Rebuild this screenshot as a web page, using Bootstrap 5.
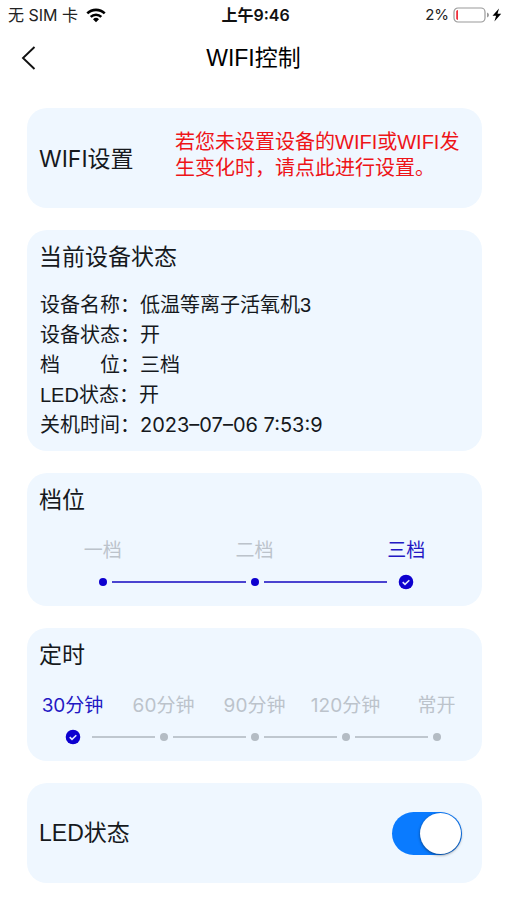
<!DOCTYPE html>
<html lang="zh-CN">
<head>
<meta charset="utf-8">
<meta name="viewport" content="width=device-width, initial-scale=1">
<title>WIFI控制</title>
<link href="https://cdn.jsdelivr.net/npm/bootstrap@5.3.0/dist/css/bootstrap.min.css" rel="stylesheet">
<style>
  body { font-family: "Liberation Sans", "Noto Sans CJK SC", sans-serif; font-size: 20px; line-height: 30px; color: #16191d; background: #fff; }
  .status-bar { height: 30px; padding: 0 4px 0 8px; font-family: Inter, "Noto Sans CJK SC", sans-serif; font-size: 16px; color: #222; }
  .side { flex: 1 1 0; }
  .percent { font-size: 15px; }
  .clock { font-weight: 600; color: #111; }
  .title-bar { display: grid; grid-template-columns: 1fr auto 1fr; height: 56px; padding: 0 20px; }
  .heading { font-size: 23px; line-height: 30px; }
  .title-bar .heading { color: #000; }
  .back { width: 18px; line-height: 0; }
  main { gap: 22px; padding: 22px 25px 17px 27px; }
  .panel { background: #eff7ff; border-radius: 20px; }
  .panel-body { padding: 12px; }
  .wifi { padding: 21px 8px 19px 12px; }
  .wifi .heading, .led .heading { line-height: 60px; }
  .wifi .heading { flex: 0 0 136px; font-family: Inter, "Noto Sans CJK SC", sans-serif; }
  .hint { line-height: 26px; color: #ee1418; }
  .led { padding: 20px; padding-left: 12px; }
  .state-list { margin-top: 18px; margin-bottom: -1px; padding-left: 1px; }
  .numeric, .step { font-family: Inter, "Noto Sans CJK SC", sans-serif; }
  .steps { margin-top: 24px; padding-bottom: 16px; }
  .step { flex: 1 1 0; gap: 11px; color: #bcc3cb; font-size: 19px; line-height: 24px; cursor: pointer; }
  .step.chosen { color: #2318c4; }
  .track { height: 16px; color: #bfc7cf; }
  .track.done { color: #4a43d0; }
  .seg { flex: 1 1 0; height: 2px; background: currentColor; }
  .seg.none { background: none; }
  .dot { appearance: none; flex: none; width: 8px; height: 8px; margin: 0 5px; border-radius: 50%; background: #b4bcc4; cursor: pointer; }
  .dot.done { background: #0d00cf; }
  .dot:checked { width: 16px; height: 16px; margin: 0 11px; background: url("data:image/svg+xml,%3Csvg xmlns='http://www.w3.org/2000/svg' viewBox='0 0 16 16'%3E%3Ccircle cx='8' cy='8' r='7.3' fill='%230d00cf'/%3E%3Cpath d='M4.7 8.2l2.3 2.2 4.3-4.2' fill='none' stroke='%23dfe6ff' stroke-width='1.6'/%3E%3C/svg%3E"); }
  .toggle { appearance: none; display: flex; width: 70px; height: 43px; margin: 0; border-radius: 22px; background: #c8ced6; cursor: pointer; }
  .toggle::before { content: ""; width: 41px; height: 41px; margin: 1px; border-radius: 50%; background: #fff; box-shadow: 0 1px 3px rgba(0, 0, 0, .5); }
  .toggle:checked { justify-content: flex-end; background: #0a7bff; }
</style>
<script src="https://cdn.jsdelivr.net/npm/bootstrap@5.3.0/dist/js/bootstrap.bundle.min.js"></script>
</head>
<body>
<header>
  <div class="status-bar d-flex align-items-center">
    <div class="side d-flex align-items-center gap-2">
      <span>无 SIM 卡</span>
      <svg width="20" height="15" viewBox="0 0 20 15" aria-hidden="true"><g fill="none" stroke="#000" stroke-width="2.6"><path d="M1.3 5.400a12.400 12.400 0 0 1 17.400 0"/><path d="M4.700 8.900a7.600 7.600 0 0 1 10.600 0"/></g><path d="M10 14.200l-3-2.900a4.300 4.300 0 0 1 6 0z"/></svg>
    </div>
    <div class="clock">上午9:46</div>
    <div class="side d-flex align-items-center justify-content-end gap-1">
      <span class="percent">2%</span>
      <svg width="50" height="16" viewBox="0 0 50 16" aria-hidden="true"><rect x="1" y="1" width="31" height="14" rx="4" fill="#fff" stroke="#999" stroke-width="1.2"/><path d="M3.200 4.600Q3.200 3 5 3v10q-1.800-.2-1.800-1.600z" fill="#f0303c"/><path d="M34 5.500q2 .8 2 2.500t-2 2.500z" fill="#999"/><path d="M46 1.500l-6.500 7.300h3.600l-1.700 5.700 6.800-7.800h-3.700z"/></svg>
    </div>
  </div>
  <div class="title-bar align-items-center">
    <button type="button" class="back btn p-0 border-0" aria-label="返回"><svg width="18" height="26" viewBox="0 0 18 26"><path d="M14.500 2L3 13l11.500 11" fill="none" stroke="#111" stroke-width="1.900"/></svg></button>
    <h1 class="heading m-0 fw-normal">WIFI控制</h1>
  </div>
</header>
<main class="d-flex flex-column">
  <a href="#wifi" id="wifi" class="panel wifi d-flex text-reset text-decoration-none">
    <span class="heading">WIFI设置</span>
    <span class="hint">若您未设置设备的WIFI或WIFI发生变化时，请点此进行设置。</span>
  </a>
  <section class="panel panel-body">
    <h2 class="heading m-0 fw-normal">当前设备状态</h2>
    <dl class="state-list">
      <div class="d-flex"><dt class="fw-normal">设备名称：</dt><dd class="m-0">低温等离子活氧机3</dd></div>
      <div class="d-flex"><dt class="fw-normal">设备状态：</dt><dd class="m-0">开</dd></div>
      <div class="d-flex"><dt class="fw-normal">档　　位：</dt><dd class="m-0">三档</dd></div>
      <div class="d-flex"><dt class="fw-normal">LED状态：</dt><dd class="m-0">开</dd></div>
      <div class="d-flex"><dt class="fw-normal">关机时间：</dt><dd class="numeric m-0">2023–07–06 7:53:9</dd></div>
    </dl>
  </section>
  <section class="panel">
    <h2 class="heading fw-normal m-0 px-2 ms-1 pt-2 mt-1">档位</h2>
    <div class="steps d-flex text-center" role="radiogroup" aria-label="档位">
      <label class="step d-flex flex-column">一档<span class="track done d-flex align-items-center"><span class="seg none"></span><input class="dot done" type="radio" name="gear"><span class="seg"></span></span></label>
      <label class="step d-flex flex-column">二档<span class="track done d-flex align-items-center"><span class="seg"></span><input class="dot done" type="radio" name="gear"><span class="seg"></span></span></label>
      <label class="step chosen d-flex flex-column">三档<span class="track done d-flex align-items-center"><span class="seg"></span><input class="dot" type="radio" name="gear" checked><span class="seg none"></span></span></label>
    </div>
  </section>
  <section class="panel">
    <h2 class="heading fw-normal m-0 px-2 ms-1 pt-2 mt-1">定时</h2>
    <div class="steps d-flex text-center" role="radiogroup" aria-label="定时">
      <label class="step chosen d-flex flex-column">30分钟<span class="track d-flex align-items-center"><span class="seg none"></span><input class="dot" type="radio" name="timer" checked><span class="seg"></span></span></label>
      <label class="step d-flex flex-column">60分钟<span class="track d-flex align-items-center"><span class="seg"></span><input class="dot" type="radio" name="timer"><span class="seg"></span></span></label>
      <label class="step d-flex flex-column">90分钟<span class="track d-flex align-items-center"><span class="seg"></span><input class="dot" type="radio" name="timer"><span class="seg"></span></span></label>
      <label class="step d-flex flex-column">120分钟<span class="track d-flex align-items-center"><span class="seg"></span><input class="dot" type="radio" name="timer"><span class="seg"></span></span></label>
      <label class="step d-flex flex-column">常开<span class="track d-flex align-items-center"><span class="seg"></span><input class="dot" type="radio" name="timer"><span class="seg none"></span></span></label>
    </div>
  </section>
  <section class="panel led d-flex align-items-center justify-content-between">
    <label class="heading" for="led">LED状态</label>
    <input class="toggle" type="checkbox" role="switch" id="led" checked>
  </section>
</main>
</body>
</html>
